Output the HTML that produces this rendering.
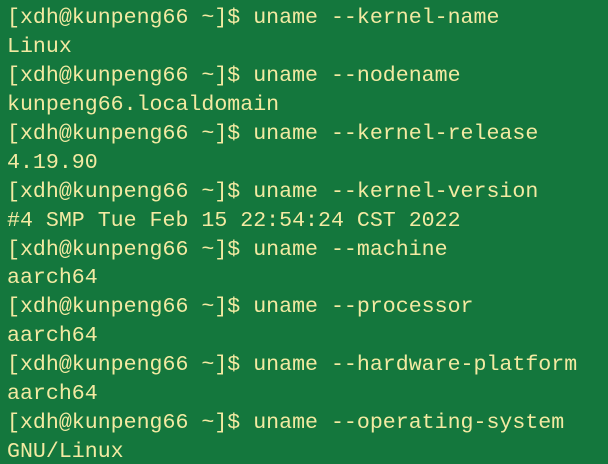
<!DOCTYPE html>
<html><head><style>
html,body{margin:0;padding:0;width:608px;height:464px;overflow:hidden;background:#14773d;}
pre{margin:0;padding:4px 0 0 7px;font-family:"Liberation Mono",monospace;font-size:21.6px;line-height:28.93px;color:#f3eaa2;}
</style></head><body><pre>[xdh@kunpeng66 ~]$ uname --kernel-name
Linux
[xdh@kunpeng66 ~]$ uname --nodename
kunpeng66.localdomain
[xdh@kunpeng66 ~]$ uname --kernel-release
4.19.90
[xdh@kunpeng66 ~]$ uname --kernel-version
#4 SMP Tue Feb 15 22:54:24 CST 2022
[xdh@kunpeng66 ~]$ uname --machine
aarch64
[xdh@kunpeng66 ~]$ uname --processor
aarch64
[xdh@kunpeng66 ~]$ uname --hardware-platform
aarch64
[xdh@kunpeng66 ~]$ uname --operating-system
GNU/Linux</pre></body></html>
